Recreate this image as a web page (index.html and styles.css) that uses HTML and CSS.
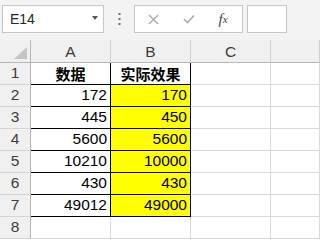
FILE: index.html
```html
<!DOCTYPE html>
<html>
<head>
<meta charset="utf-8">
<link rel="stylesheet" href="styles.css">
</head>
<body>
<div class="topbar">
  <div class="namebox"><span class="name">E14</span><span class="arrow"></span></div>
  <div class="sep">
    <svg width="3" height="12" viewBox="0 0 3 12"><rect x="0.5" y="0" width="2" height="2" fill="#6b6b6b"/><rect x="0.5" y="5" width="2" height="2" fill="#6b6b6b"/><rect x="0.5" y="10" width="2" height="2" fill="#6b6b6b"/></svg>
  </div>
  <div class="fbox">
    <span class="slot"><svg width="11" height="11" viewBox="0 0 11 11"><path d="M1 1 L10 10 M10 1 L1 10" stroke="#a9a9a9" stroke-width="1.4" fill="none"/></svg></span>
    <span class="slot"><svg width="12" height="10" viewBox="0 0 12 10"><path d="M1 5 L4.5 8.5 L11 1.5" stroke="#a9a9a9" stroke-width="1.6" fill="none"/></svg></span>
    <span class="slot fx">f<sub>x</sub></span>
  </div>
  <div class="fbox2"></div>
</div>
<div class="sheet">
  <div class="c hd corner"><svg width="13" height="12" viewBox="0 0 13 12"><polygon points="13,0 13,12 0,12" fill="#c4c4c4"/></svg></div>
  <div class="c hd">A</div>
  <div class="c hd">B</div>
  <div class="c hd">C</div>
  <div class="c hd"></div>

  <div class="c rh">1</div>
  <div class="c d ttl">数据</div>
  <div class="c d ttl">实际效果</div>
  <div class="c"></div>
  <div class="c"></div>

  <div class="c rh">2</div>
  <div class="c d num">172</div>
  <div class="c d num y">170</div>
  <div class="c"></div>
  <div class="c"></div>

  <div class="c rh">3</div>
  <div class="c d num">445</div>
  <div class="c d num y">450</div>
  <div class="c"></div>
  <div class="c"></div>

  <div class="c rh">4</div>
  <div class="c d num">5600</div>
  <div class="c d num y">5600</div>
  <div class="c"></div>
  <div class="c"></div>

  <div class="c rh">5</div>
  <div class="c d num">10210</div>
  <div class="c d num y">10000</div>
  <div class="c"></div>
  <div class="c"></div>

  <div class="c rh">6</div>
  <div class="c d num">430</div>
  <div class="c d num y">430</div>
  <div class="c"></div>
  <div class="c"></div>

  <div class="c rh">7</div>
  <div class="c d num">49012</div>
  <div class="c d num y">49000</div>
  <div class="c"></div>
  <div class="c"></div>

  <div class="c rh">8</div>
  <div class="c"></div>
  <div class="c"></div>
  <div class="c"></div>
  <div class="c"></div>
</div>
</body>
</html>
```

FILE: styles.css
```css
html, body {
  margin: 0;
  padding: 0;
  background: #ffffff;
  font-family: "Liberation Sans", Arial, sans-serif;
  overflow: hidden;
}

.topbar {
  height: 40px;
  box-sizing: border-box;
  padding-top: 5px;
  background: #f3f3f3;
  display: flex;
  align-items: flex-start;
}

.namebox {
  margin-left: 2px;
  width: 102px;
  height: 28px;
  box-sizing: border-box;
  border: 1px solid #c6c6c6;
  background: #ffffff;
  display: flex;
  align-items: center;
  justify-content: space-between;
  padding: 0 5px 0 7px;
}

.name {
  font-size: 14px;
  color: #262626;
  line-height: 16px;
}

.arrow {
  width: 0;
  height: 0;
  border-left: 3.5px solid transparent;
  border-right: 3.5px solid transparent;
  border-top: 4px solid #555555;
  margin-top: -2px;
}

.sep {
  width: 30px;
  height: 28px;
  display: flex;
  align-items: center;
  justify-content: center;
}

.fbox {
  width: 109px;
  height: 28px;
  box-sizing: border-box;
  border: 1px solid #c6c6c6;
  background: #ffffff;
  display: flex;
  align-items: center;
}

.slot {
  width: 36px;
  display: flex;
  align-items: center;
  justify-content: center;
}

.fx {
  font-family: "Liberation Serif", "Times New Roman", serif;
  font-style: italic;
  font-size: 15px;
  color: #444444;
  line-height: 16px;
  margin-left: -2px;
}

.fx sub {
  font-size: 11px;
  vertical-align: -1px;
}

.fbox2 {
  margin-left: 4px;
  width: 40px;
  height: 28px;
  box-sizing: border-box;
  border: 1px solid #c6c6c6;
  background: #ffffff;
}

.sheet {
  display: grid;
  grid-template-columns: 31px 80px 80px 80px 1fr;
  grid-template-rows: 23px repeat(8, 22px);
}

.c {
  box-sizing: border-box;
  border-right: 1px solid #d9d9d9;
  border-bottom: 1px solid #d9d9d9;
  font-size: 15.5px;
  line-height: 20px;
  color: #000000;
  padding: 0 3px;
  white-space: nowrap;
}

.hd {
  background: #f0f0f0;
  border-right: 1px solid #cfcfcf;
  border-bottom: 1px solid #b7b7b7;
  color: #3c3c3c;
  text-align: center;
  padding-top: 2px;
  line-height: 20px;
}

.corner {
  display: flex;
  justify-content: flex-end;
  align-items: flex-end;
  padding: 0 3px 3px 0;
  border-right: 1px solid #b7b7b7;
}

.rh {
  background: #f0f0f0;
  border-right: 1px solid #b7b7b7;
  border-bottom: 1px solid #d4d4d4;
  color: #3c3c3c;
  text-align: center;
  padding: 0;
}

.d {
  border-right: 1px solid #000000;
  border-bottom: 1px solid #000000;
}

.num {
  text-align: right;
}

.ttl {
  text-align: center;
  font-family: "Noto Sans CJK SC", "Liberation Sans", sans-serif;
  font-weight: bold;
  font-size: 15px;
  line-height: 21px;
}

.y {
  background: #ffff00;
}
```
